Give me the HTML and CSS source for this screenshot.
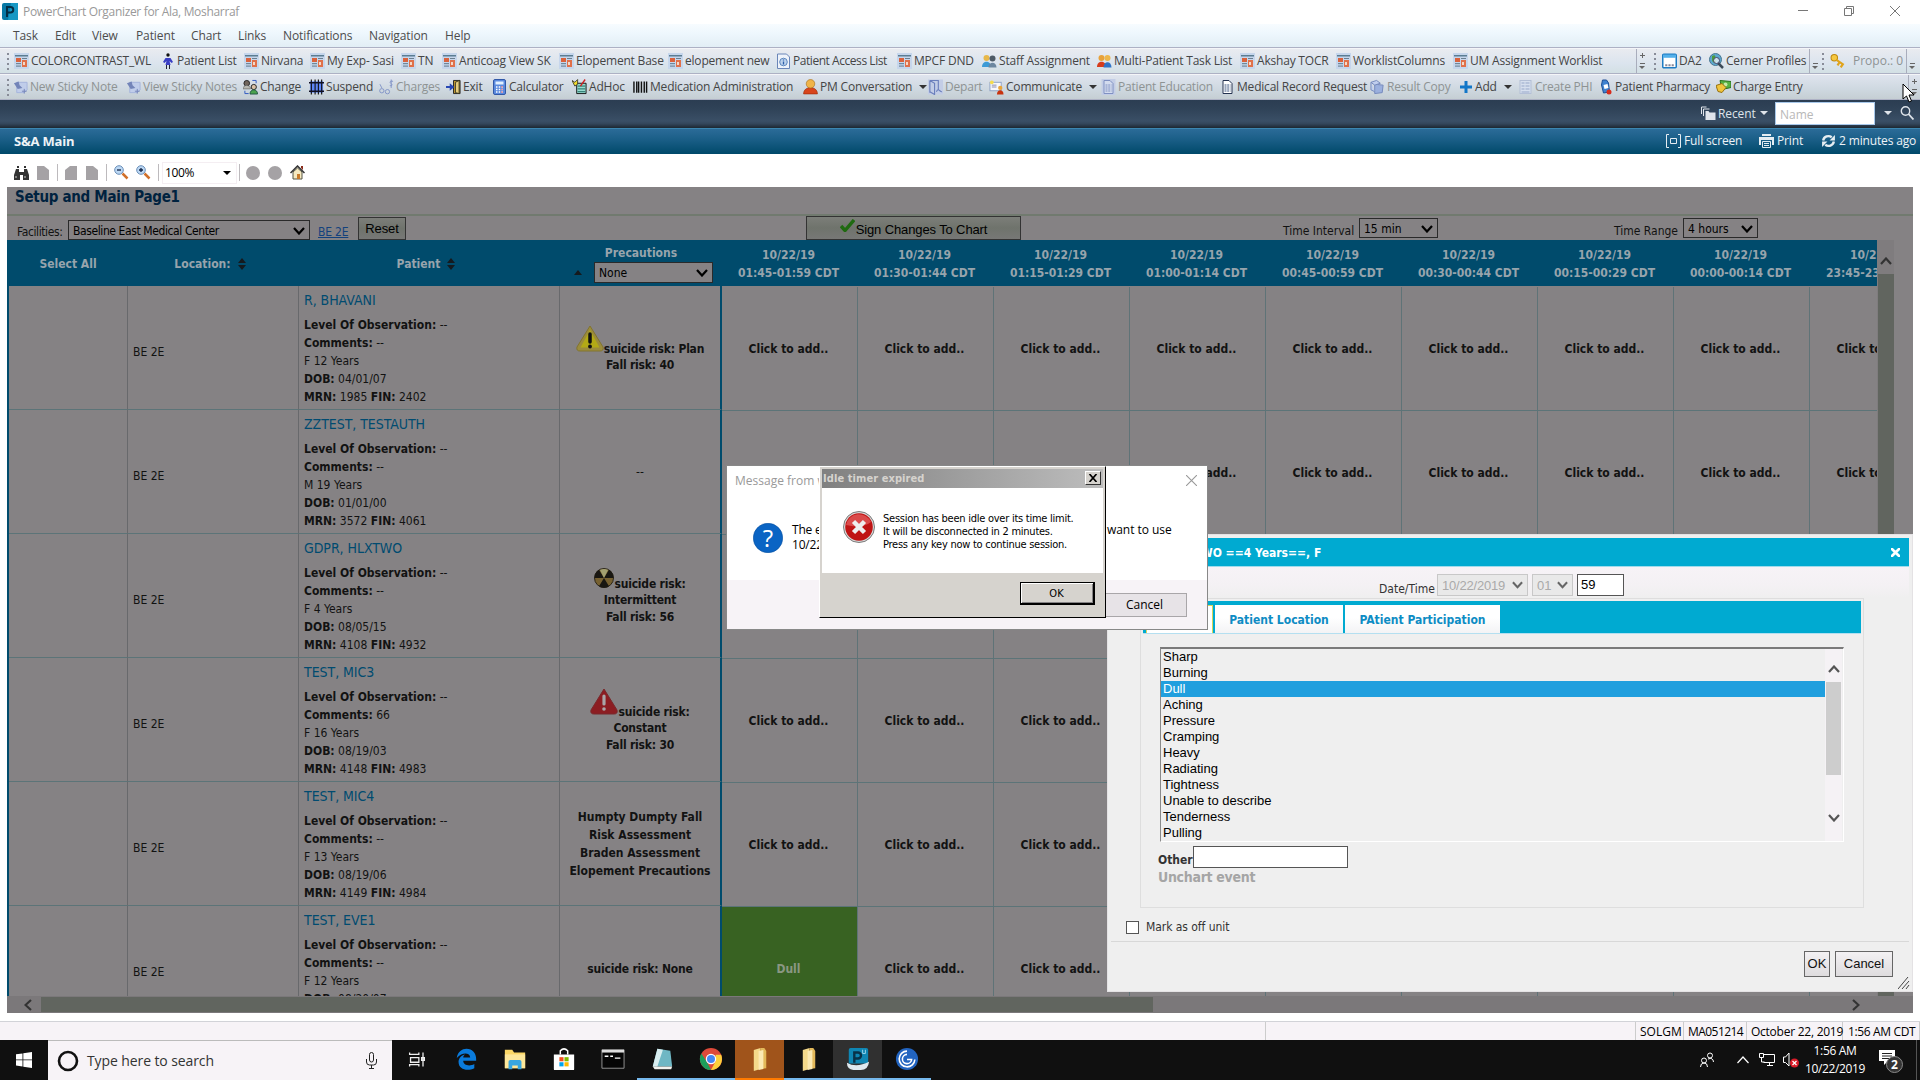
FILE: index.html
```html
<!DOCTYPE html>
<html lang="en">
<head>
<meta charset="utf-8">
<title>PowerChart Organizer</title>
<link rel="stylesheet" href="styles.css">
</head>
<body>
<svg class="defs" aria-hidden="true">
<symbol id="i-work" viewBox="0 0 15 16"><rect width="15" height="16" fill="#c6d6ec"/><rect x="1" y="2" width="13" height="1.5" fill="#5b7d93"/><rect x="2" y="5" width="5" height="4" fill="#d9623d"/><rect x="8" y="5" width="5" height="1" fill="#6b7f90"/><rect x="8" y="7" width="5" height="7" fill="#e0704a"/><rect x="9" y="9" width="2" height="3" fill="#f3d8c8"/><rect x="2" y="10" width="5" height="1.2" fill="#71879a"/><rect x="2" y="12.500" width="5" height="1.2" fill="#71879a"/></symbol>
<symbol id="i-man" viewBox="0 0 11 16"><circle cx="5.500" cy="2" r="1.700" fill="#111"/><path d="M3 5h5l2.500 4-1.500 1-2-2 1 4H3l1-4-2 2-1.500-1z" fill="#3a3fc4"/><path d="M4 12v4M7 12v4" stroke="#223" /></symbol>
<symbol id="i-pal" viewBox="0 0 13 16"><path d="M.5 1h9l3 3v11.500H.5z" fill="#eef3fa" stroke="#6a86b8"/><circle cx="6.500" cy="9" r="3.800" fill="#bcd2ec" stroke="#5e88c0"/><path d="M6.500 6.500v1M6.500 8.500v3" stroke="#2d5ea8" stroke-width="1.300"/></symbol>
<symbol id="i-staff" viewBox="0 0 15 14"><circle cx="4.500" cy="4" r="3" fill="#e8b84a"/><path d="M0 13c0-7 9-7 9 0z" fill="#3d9bd6"/><circle cx="10.500" cy="4.500" r="3" fill="#4e5a66"/><path d="M6.500 13.500c0-6.500 8-6.500 8 0z" fill="#6c87a0"/></symbol>
<symbol id="i-multi" viewBox="0 0 15 14"><circle cx="4.500" cy="4" r="3" fill="#e8a23a"/><path d="M0 13c0-7 9-7 9 0z" fill="#d63c1d"/><circle cx="10.500" cy="4" r="3" fill="#edb74b"/><path d="M6.500 13.500c0-7 8-7 8 0z" fill="#2f74c8"/></symbol>
<symbol id="i-da" viewBox="0 0 14 14"><rect x=".7" y=".7" width="12.600" height="12.600" rx="1" fill="#fff" stroke="#1d7cc4" stroke-width="1.400"/><rect x="1" y="1" width="12" height="3" fill="#53b0ea"/><path d="M3 11h8" stroke="#889" stroke-width="2" stroke-dasharray="2 1"/></symbol>
<symbol id="i-globe" viewBox="0 0 15 16"><circle cx="6.500" cy="6.500" r="6" fill="#5ca8d0" stroke="#47758f"/><path d="M3 3c3-2 4 0 3 2s2 2 1 4-4 0-4-2z" fill="#4d9b3c"/><path d="M9 10l5 5" stroke="#3b4a58" stroke-width="2.500"/><circle cx="7.500" cy="7.500" r="3" fill="#e6f2fa" fill-opacity=".8" stroke="#446"/></symbol>
<symbol id="i-key" viewBox="0 0 14 14"><circle cx="4" cy="4" r="3" fill="#f6c840" stroke="#c08a10"/><path d="M6 6l6 4-2 3M9 8l-2 3" stroke="#e0a41c" stroke-width="2" fill="none"/></symbol>
<symbol id="i-note" viewBox="0 0 16 16"><path d="M4 3h11v8l-3 3H4z" fill="#c0cdea" stroke="#a4b4dc"/><path d="M1 4l5-2 1 4 3 3-5 1z" fill="#7384b8"/><path d="M12 10v5M9.500 12.500h5" stroke="#7384b8"/></symbol>
<symbol id="i-change" viewBox="0 0 16 16"><circle cx="4" cy="4" r="3" fill="#70655c" stroke="#222"/><path d="M0 10c0-5 8-5 8 0z" fill="#b7b7b0" stroke="#444" stroke-width=".5"/><circle cx="11.500" cy="8" r="2.800" fill="#d9c0a6" stroke="#222"/><path d="M7.500 15.500c0-6 8-6 8 0z" fill="#4aa34e" stroke="#254"/><path d="M10 1h4v3M2 12v3h4" stroke="#2c55c0" fill="none"/></symbol>
<symbol id="i-susp" viewBox="0 0 16 16"><rect x="1" y="2" width="14" height="12" fill="#5f86f8"/><path d="M2.500 0v16M6.500 0v16M10 0v16M13.500 0v16" stroke="#111" stroke-width="1.200"/><path d="M0 3.500h16M0 12.500h16" stroke="#112" stroke-width="1.500"/></symbol>
<symbol id="i-chg" viewBox="0 0 16 16"><circle cx="3" cy="12" r="2.300" fill="none" stroke="#8193c6"/><circle cx="9" cy="13" r="2.300" fill="none" stroke="#8193c6"/><path d="M3 9L1 5M15 2c-3-1-4 1-2.500 2S15 7 11.500 6.500M13 0v9" stroke="#8193c6" fill="none"/></symbol>
<symbol id="i-exit" viewBox="0 0 16 16"><path d="M8 1h7v14H8z" fill="#c79a2e" stroke="#222"/><path d="M10 3l4-2v14l-4-1z" fill="#e7cd7c" stroke="#332"/><path d="M0 7h4V4l5 4-5 4V9H0z" fill="#2848b4"/></symbol>
<symbol id="i-calc" viewBox="0 0 13 16"><rect x=".5" y=".5" width="12" height="15" rx="1.500" fill="#5b8ade" stroke="#3158a8"/><rect x="2.500" y="2.500" width="8" height="3" fill="#e2f0ff"/><path d="M3 8h7M3 10.500h7M3 13h7" stroke="#fff" stroke-width="1.500" stroke-dasharray="1.500 1.200"/><path d="M9 7v7" stroke="#e55" stroke-dasharray="1.500 1.200"/></symbol>
<symbol id="i-adhoc" viewBox="0 0 16 16"><path d="M5 4h10v11H5z" fill="#9adbd0" stroke="#111"/><path d="M6 7h8M6 10h8M6 13h8" stroke="#16655c"/><path d="M0 1l3 2 3-3v5l-3 2z" fill="#f3dd2b" stroke="#443"/><path d="M14 0l-5 7" stroke="#c22" stroke-width="1.500"/></symbol>
<symbol id="i-bar" viewBox="0 0 16 14"><path d="M1 1v12M4 1v12M6 1v12M9 1v12M12 1v12M14.500 1v12" stroke="#111" stroke-width="1.500"/></symbol>
<symbol id="i-pm" viewBox="0 0 13 15"><path d="M0 14c0-8 13-8 13 0z" fill="#d8451c" stroke="#9c2a0a" stroke-width=".6"/><circle cx="6.500" cy="4.500" r="4" fill="#f0b449" stroke="#a9701a" stroke-width=".6"/></symbol>
<symbol id="i-dep" viewBox="0 0 16 16"><rect width="16" height="16" fill="#c3cde6"/><path d="M2 1h9v10M2 1v13M2 1l5 3v12l-5-3M9 13c2-5 4 1 6 0" fill="none" stroke="#6b7fbc" stroke-width="1.200"/></symbol>
<symbol id="i-com" viewBox="0 0 16 16"><rect x="1" y="3" width="12" height="9" fill="#f7f7fb" stroke="#8ca0c4"/><path d="M3 6h5M3 8h5" stroke="#88a"/><circle cx="3" cy="3" r="2" fill="#f6dc4c"/><circle cx="12" cy="9" r="2.300" fill="#e9a53a"/><path d="M8.500 16c0-6 7-6 7 0z" fill="#c8330f"/></symbol>
<symbol id="i-doc" viewBox="0 0 14 16"><path d="M2.500 1.500h6l3 3v10h-9z" fill="#fff" stroke="#243250"/><path d="M4 6h6M4 8h6M4 10h6M4 12h6" stroke="#36507c" stroke-dasharray="2 .7"/></symbol>
<symbol id="i-docoff" viewBox="0 0 14 16"><rect width="14" height="16" fill="#c3cde6"/><path d="M2.500 1.500h6l3 3v10h-9z" fill="#d3dbee" stroke="#7f90c2"/><path d="M4 6h6M4 8h6M4 10h6M4 12h6" stroke="#7f90c2" stroke-dasharray="2 .7"/></symbol>
<symbol id="i-copy" viewBox="0 0 16 16"><path d="M5 5l9 1-1 8-8 1z" fill="#9bb0de" stroke="#7388bb"/><path d="M1 3l6-2 4 3-6 2zM1 3v8l4 2" fill="#c1cfee" stroke="#7388bb"/></symbol>
<symbol id="i-add" viewBox="0 0 12 12"><path d="M6 0v12M0 6h12" stroke="#1176c8" stroke-width="3"/></symbol>
<symbol id="i-phi" viewBox="0 0 12 16"><rect x=".5" y="1.500" width="11" height="13" fill="#d6dfee" stroke="#b3bfd6"/><path d="M2 4h3M6 4h4M2 7h3M6 7h4M2 10h3M6 10h4M2 13h8" stroke="#97a7c8"/></symbol>
<symbol id="i-pha" viewBox="0 0 11 16"><path d="M2 1l4 0 2 3 1 9-6 1L1 6z" fill="#3f82d0" stroke="#1e4f96"/><path d="M3 6l4-1 1 4-4 1z" fill="#fff"/><circle cx="8.500" cy="13" r="2.500" fill="#d82c1c"/></symbol>
<symbol id="i-ce" viewBox="0 0 15 15"><path d="M4 1l11 1v6l-9 2z" fill="#57b243" stroke="#2b7320"/><circle cx="9.500" cy="5" r="2" fill="#c5eaa8"/><path d="M0 6l6-2 4 4-4 5-4-1z" fill="#f0c53c" stroke="#96700e"/></symbol>
<symbol id="i-warn" viewBox="0 0 28 27"><path d="M14 1L27 22q1 4-3 4H4q-4 0-3-4z" fill="#9b8c3c" stroke="#82742f"/><path d="M14 5l9.500 17.500h-19z" fill="#b3aa15"/><path d="M14 9v8" stroke="#111" stroke-width="3.500" stroke-linecap="round"/><circle cx="14" cy="21.500" r="1.900" fill="#111"/></symbol>
<symbol id="i-alert" viewBox="0 0 28 27"><path d="M14 1L27 22q1 4-3 4H4q-4 0-3-4z" fill="#8c1d22" stroke="#79292c"/><path d="M14 8v8" stroke="#a9a6a8" stroke-width="3.200" stroke-linecap="round"/><circle cx="14" cy="21" r="1.800" fill="#a9a6a8"/></symbol>
<symbol id="i-rad" viewBox="0 0 20 20"><circle cx="10" cy="10" r="9.500" fill="#776131" stroke="#2c261a"/><path d="M10 10L5 1.800a9.500 9.500 0 0 0-4.500 8.200zM10 10l9.500 0a9.500 9.500 0 0 0-4.500-8.200zM10 10l-5 8.200a9.500 9.500 0 0 0 10 0z" fill="#191712"/><path d="M10 10L6 2q4-2 8 0z" fill="#a3a070"/></symbol>
<symbol id="i-chev" viewBox="0 0 12 8"><path d="M1 1l5 5.500L11 1" fill="none" stroke="currentColor" stroke-width="2.200"/></symbol>
<symbol id="i-sort" viewBox="0 0 8 12"><path d="M4 0l4 5H0zM4 12l4-5H0z" fill="#151a1e"/></symbol>
<symbol id="i-x" viewBox="0 0 10 10"><path d="M0 0l10 10M10 0L0 10" stroke="currentColor" fill="none"/></symbol>
<symbol id="i-page" viewBox="0 0 12 14"><path d="M0 0h7l5 4v10H0z" fill="#a5a2a5"/></symbol>
<symbol id="i-folder" viewBox="0 0 14 24"><path d="M0 2l7-2v22l-7 2z" fill="#f4d98b"/><path d="M7 0h4l2 3v18l-6 1z" fill="#e3b95a"/><path d="M5 3l5-1v20l-5 1z" fill="#fbe9b4"/></symbol>
</svg>

<header class="titlebar">
  <svg class="logo" viewBox="0 0 16 17"><rect width="16" height="17" rx="2" fill="#0879a6"/><path d="M9 0h7v17H6z" fill="#1898c4"/><path d="M5 14V4h3.500a2.700 2.700 0 0 1 0 5.500H5" fill="none" stroke="#052e45" stroke-width="2"/></svg>
  <span>PowerChart Organizer for Ala, Mosharraf</span>
  <div class="winbtns"><svg viewBox="0 0 10 10"><path d="M0 4.500h10" stroke="#777"/></svg><svg viewBox="0 0 10 10"><path d="M.5 2.500h7v7h-7zM2.500 2.500v-2h7v7h-2" fill="none" stroke="#777"/></svg><svg class="c"><use href="#i-x"/></svg></div>
</header>
<nav class="menu"><span>Task</span><span>Edit</span><span>View</span><span>Patient</span><span>Chart</span><span>Links</span><span>Notifications</span><span>Navigation</span><span>Help</span></nav>

<div class="tools t1">
  <i class="grip"></i>
  <a><svg><use href="#i-work"/></svg>COLORCONTRAST_WL</a>
  <a><svg class="n"><use href="#i-man"/></svg>Patient List</a>
  <a><svg><use href="#i-work"/></svg>Nirvana</a>
  <a><svg><use href="#i-work"/></svg>My Exp- Sasi</a>
  <a><svg><use href="#i-work"/></svg>TN</a>
  <a><svg><use href="#i-work"/></svg>Anticoag View SK</a>
  <a><svg><use href="#i-work"/></svg>Elopement Base</a>
  <a><svg><use href="#i-work"/></svg>elopement new</a>
  <a class="tight"><svg><use href="#i-pal"/></svg>Patient Access List</a>
  <a><svg><use href="#i-work"/></svg>MPCF DND</a>
  <a><svg><use href="#i-staff"/></svg>Staff Assignment</a>
  <a><svg><use href="#i-multi"/></svg>Multi-Patient Task List</a>
  <a><svg><use href="#i-work"/></svg>Akshay TOCR</a>
  <a><svg><use href="#i-work"/></svg>WorklistColumns</a>
  <a><svg><use href="#i-work"/></svg>UM Assignment Worklist</a>
  <i class="more plus"></i><i class="grip"></i>
  <a><svg><use href="#i-da"/></svg>DA2</a>
  <a><svg><use href="#i-globe"/></svg>Cerner Profiles</a>
  <i class="more"></i><i class="grip"></i>
  <a class="off key"><svg><use href="#i-key"/></svg>Propo.: 0</a>
  <i class="more"></i>
</div>
<div class="tools t2">
  <i class="grip"></i>
  <a class="off"><svg><use href="#i-note"/></svg>New Sticky Note</a>
  <a class="off"><svg><use href="#i-note"/></svg>View Sticky Notes</a>
  <a><svg><use href="#i-change"/></svg>Change</a>
  <a><svg><use href="#i-susp"/></svg>Suspend</a>
  <a class="off"><svg><use href="#i-chg"/></svg>Charges</a>
  <a><svg><use href="#i-exit"/></svg>Exit</a>
  <a><svg><use href="#i-calc"/></svg>Calculator</a>
  <a><svg><use href="#i-adhoc"/></svg>AdHoc</a>
  <a><svg><use href="#i-bar"/></svg>Medication Administration</a>
  <a><svg><use href="#i-pm"/></svg>PM Conversation<b></b></a>
  <a class="off"><svg><use href="#i-dep"/></svg>Depart</a>
  <a><svg><use href="#i-com"/></svg>Communicate<b></b></a>
  <a class="off"><svg><use href="#i-docoff"/></svg>Patient Education</a>
  <a><svg><use href="#i-doc"/></svg>Medical Record Request</a>
  <a class="off"><svg><use href="#i-copy"/></svg>Result Copy</a>
  <a><svg class="pl"><use href="#i-add"/></svg>Add<b></b></a>
  <a class="off"><svg><use href="#i-phi"/></svg>Create PHI</a>
  <a><svg class="n"><use href="#i-pha"/></svg>Patient Pharmacy</a>
  <a><svg><use href="#i-ce"/></svg>Charge Entry</a>
  <i class="more plus"></i>
</div>

<div class="navbar">
  <svg class="recent" viewBox="0 0 15 14"><path d="M1 8V1h5M3 10V3h6" fill="none" stroke="#dfe4ea"/><path d="M5 5h3l1 1.500h6V14H5z" fill="#dfe4ea"/></svg>
  <span>Recent</span><b></b><div class="name">Name</div><b class="d2"></b>
  <svg class="mag" viewBox="0 0 14 14"><circle cx="5.500" cy="5" r="4.200" fill="none" stroke="#dfe4ea" stroke-width="1.400"/><path d="M8.500 8l5 5.500" stroke="#dfe4ea" stroke-width="1.800"/></svg>
</div>
<div class="sabar">
  <strong>S&amp;A Main</strong>
  <span class="fs"><svg viewBox="0 0 15 14"><path d="M3 .5H.5v13H3M12 .5h2.500v13H12M4.500 4.500h6v5h-6z" fill="none" stroke="#e6edf2"/></svg>Full screen</span>
  <span class="pr"><svg viewBox="0 0 15 14"><path d="M3 0h9v2H3zM0 3h15v8h-2V6H2v5H0z" fill="#e6edf2"/><path d="M3.500 7.500h8v6h-8zM5 9.500h5M5 11.500h5" fill="none" stroke="#e6edf2"/></svg>Print</span>
  <span class="rf"><svg viewBox="0 0 14 13"><path d="M2 6a5 5 0 0 1 8-3M12 7a5 5 0 0 1-8 3" fill="none" stroke="#e6edf2" stroke-width="2.200"/><path d="M8 6h5V1zM6 7H1v5z" fill="#e6edf2"/></svg>2 minutes ago</span>
</div>
<div class="browser">
  <svg class="bino" viewBox="0 0 15 14"><path d="M2 3h3v3h5V3h3l2 6v5H9V9H6v5H0V9zM3 0h2v2H3zM10 0h2v2h-2z" fill="#333"/><path d="M2 10v2M11 10v2" stroke="#ccc"/></svg>
  <svg class="pg"><use href="#i-page"/></svg><i></i>
  <svg class="pg flip"><use href="#i-page"/></svg><svg class="pg"><use href="#i-page"/></svg><i></i>
  <svg class="zm" viewBox="0 0 15 15"><circle cx="5" cy="5" r="4.300" fill="#bcd8f4" stroke="#6b8fb8"/><path d="M3 5h4" stroke="#124" stroke-width="1.300"/><path d="M8.500 8.500l5 5" stroke="#d0702a" stroke-width="2.500"/></svg>
  <svg class="zm" viewBox="0 0 15 15"><circle cx="5" cy="5" r="4.300" fill="#bcd8f4" stroke="#6b8fb8"/><path d="M3 5h4M5 3v4" stroke="#124" stroke-width="1.300"/><path d="M8.500 8.500l5 5" stroke="#d0702a" stroke-width="2.500"/></svg><i></i>
  <div class="pct">100%<b></b></div><i class="last"></i><em></em><em></em>
  <svg class="home" viewBox="0 0 15 15"><path d="M3 7v7h9V7L7.500 3z" fill="#f5e9c0" stroke="#554"/><path d="M.5 8l7-7 7 7" fill="none" stroke="#333" stroke-width="1.500"/><path d="M7 9h3v5H7z" fill="#c87a2a"/><path d="M11 1h2v4l-2-2z" fill="#8b2b1a"/></svg>
</div>

<main class="page">
  <h1>Setup and Main Page1</h1>
  <div class="filters">
    <label class="l1">Facilities:</label><div class="sel s1">Baseline East Medical Center<svg><use href="#i-chev"/></svg></div>
    <a class="be">BE 2E</a><div class="btn reset">Reset</div>
    <div class="btn sign"><svg viewBox="0 0 15 13"><path d="M1 7l4 4.500L14 1" fill="none" stroke="#1f6a10" stroke-width="3.400"/></svg>Sign Changes To Chart</div>
    <label class="l2">Time Interval</label><div class="sel s2">15 min<svg><use href="#i-chev"/></svg></div>
    <label class="l3">Time Range</label><div class="sel s3">4 hours<svg><use href="#i-chev"/></svg></div>
  </div>
  <div class="mid">
  <div class="grid">
    <div class="row head">
      <div>Select All</div><div class="hl">Location: <svg class="so"><use href="#i-sort"/></svg></div><div class="hl">Patient <svg class="so"><use href="#i-sort"/></svg></div>
      <div class="pc"><span>Precautions</span><div class="pcs"><i></i><div class="sel">None<svg><use href="#i-chev"/></svg></div></div></div>
      <div>10/22/19<br>01:45-01:59 CDT</div><div>10/22/19<br>01:30-01:44 CDT</div><div>10/22/19<br>01:15-01:29 CDT</div><div>10/22/19<br>01:00-01:14 CDT</div><div>10/22/19<br>00:45-00:59 CDT</div><div>10/22/19<br>00:30-00:44 CDT</div><div>10/22/19<br>00:15-00:29 CDT</div><div>10/22/19<br>00:00-00:14 CDT</div><div>10/22/19<br>23:45-23:59 CDT</div>
    </div>
    <div class="row">
      <div></div><div class="loc">BE 2E</div>
      <div class="pt"><a>R, BHAVANI</a><p><b>Level Of Observation:</b> --</p><p><b>Comments:</b> --</p><p>F 12 Years</p><p><b>DOB:</b> 04/01/07</p><p><b>MRN:</b> 1985 <b>FIN:</b> 2402</p></div>
      <div class="pre nar"><span class="ic w"><svg><use href="#i-warn"/></svg>suicide risk: Plan</span><span class="n16">Fall risk: 40</span></div>
      <div>Click to add..</div><div>Click to add..</div><div>Click to add..</div><div>Click to add..</div><div>Click to add..</div><div>Click to add..</div><div>Click to add..</div><div>Click to add..</div><div>Click to add..</div>
    </div>
    <div class="row">
      <div></div><div class="loc">BE 2E</div>
      <div class="pt"><a>ZZTEST, TESTAUTH</a><p><b>Level Of Observation:</b> --</p><p><b>Comments:</b> --</p><p>M 19 Years</p><p><b>DOB:</b> 01/01/00</p><p><b>MRN:</b> 3572 <b>FIN:</b> 4061</p></div>
      <div class="pre thin">--</div>
      <div>Click to add..</div><div>Click to add..</div><div>Click to add..</div><div>Click to add..</div><div>Click to add..</div><div>Click to add..</div><div>Click to add..</div><div>Click to add..</div><div>Click to add..</div>
    </div>
    <div class="row">
      <div></div><div class="loc">BE 2E</div>
      <div class="pt"><a>GDPR, HLXTWO</a><p><b>Level Of Observation:</b> --</p><p><b>Comments:</b> --</p><p>F 4 Years</p><p><b>DOB:</b> 08/05/15</p><p><b>MRN:</b> 4108 <b>FIN:</b> 4932</p></div>
      <div class="pre nar"><span class="ic r"><svg><use href="#i-rad"/></svg>suicide risk:</span><span class="n16">Intermittent</span><span>Fall risk: 56</span></div>
      <div></div><div></div><div></div><div></div><div></div><div></div><div></div><div></div><div></div>
    </div>
    <div class="row">
      <div></div><div class="loc">BE 2E</div>
      <div class="pt"><a>TEST, MIC3</a><p><b>Level Of Observation:</b> --</p><p><b>Comments:</b> 66</p><p>F 16 Years</p><p><b>DOB:</b> 08/19/03</p><p><b>MRN:</b> 4148 <b>FIN:</b> 4983</p></div>
      <div class="pre nar"><span class="ic w"><svg><use href="#i-alert"/></svg>suicide risk:</span><span class="n16">Constant</span><span>Fall risk: 30</span></div>
      <div>Click to add..</div><div>Click to add..</div><div>Click to add..</div><div></div><div></div><div></div><div></div><div></div><div></div>
    </div>
    <div class="row">
      <div></div><div class="loc">BE 2E</div>
      <div class="pt"><a>TEST, MIC4</a><p><b>Level Of Observation:</b> --</p><p><b>Comments:</b> --</p><p>F 13 Years</p><p><b>DOB:</b> 08/19/06</p><p><b>MRN:</b> 4149 <b>FIN:</b> 4984</p></div>
      <div class="pre"><span>Humpty Dumpty Fall</span><span>Risk Assessment</span><span>Braden Assessment</span><span>Elopement Precautions</span></div>
      <div>Click to add..</div><div>Click to add..</div><div>Click to add..</div><div></div><div></div><div></div><div></div><div></div><div></div>
    </div>
    <div class="row">
      <div></div><div class="loc">BE 2E</div>
      <div class="pt"><a>TEST, EVE1</a><p><b>Level Of Observation:</b> --</p><p><b>Comments:</b> --</p><p>F 12 Years</p><p><b>DOB:</b> 08/20/07</p></div>
      <div class="pre nar">suicide risk: None</div>
      <div class="dull">Dull</div><div>Click to add..</div><div>Click to add..</div><div></div><div></div><div></div><div></div><div></div><div></div>
    </div>
  </div>
  <div class="vs"><svg><use href="#i-chev"/></svg><i></i></div>
  </div>
  <div class="hs"><svg class="la"><use href="#i-chev"/></svg><i></i><svg class="ra"><use href="#i-chev"/></svg></div>
</main>

<div class="status"><span class="a"></span><span class="b"></span><span>SOLGM</span><span>MA051214</span><span>October 22, 2019</span><span>1:56 AM CDT</span></div>

<footer class="task">
  <div class="start"><svg viewBox="0 0 16 16"><path d="M0 2.300l6.500-.9v6H0zM7.300 1.300L16 0v7.400H7.300zM0 8.200h6.500v6.200L0 13.500zM7.300 8.200H16V16l-8.700-1.300z" fill="#fff"/></svg></div>
  <div class="search"><svg class="o" viewBox="0 0 22 22"><circle cx="11" cy="11" r="9" fill="none" stroke="#111" stroke-width="2.600"/></svg><span>Type here to search</span><svg class="mic" viewBox="0 0 11 17"><rect x="3.500" y=".5" width="4" height="9.500" rx="2" fill="none" stroke="#222"/><path d="M.5 7v3q0 3 3 3h4q3 0 3-3V7M5.500 13v4M3 16.500h5" fill="none" stroke="#222"/></svg></div>
  <div class="app"><svg viewBox="0 0 26 26"><path d="M5 6v2h10V6M6 11.500h9v5H6zM5 21v-2h10v2M19.500 6v15M18 11.500h3v3h-3z" fill="none" stroke="#eee" stroke-width="1.400"/></svg></div>
  <div class="app"><svg viewBox="0 0 26 26"><path d="M3 12C4 5 9 2 13.500 2 20 2 24 7 24 13v2H10c0 5 7 6.500 12 3.500v4.500C14 27 4 24 5 15c.5-4 4-6.500 7-7-1.500 1-2 2-2 3.500h7.500C17.500 6 9 5 3 12z" fill="#0a7bdc"/></svg></div>
  <div class="app"><svg viewBox="0 0 26 26"><path d="M2 3h8l2 3h12v17H2z" fill="#fbd766"/><path d="M2 8h22v15H2z" fill="#fde79a"/><path d="M6 24v-8q0-2 2-2h10q2 0 2 2v8h-4v-4h-6v4z" fill="#38a6e0"/></svg></div>
  <div class="app"><svg viewBox="0 0 26 26"><path d="M9 8V4q4-4 8 0v4" fill="none" stroke="#fff" stroke-width="1.600"/><path d="M2 8h22v16q0 1-1 1H3q-1 0-1-1z" fill="#fff"/><path d="M8 11h4.500v4.500H8z" fill="#f25022"/><path d="M13.500 11H18v4.500h-4.500z" fill="#7fba00"/><path d="M8 16.500h4.500V21H8z" fill="#00a4ef"/><path d="M13.500 16.500H18V21h-4.500z" fill="#ffb900"/></svg></div>
  <div class="app"><svg viewBox="0 0 26 26"><path d="M1 3h24v20H1z" fill="#050505" stroke="#999"/><path d="M1 3h24v3H1z" fill="#ddd"/><path d="M4 10h4M10 10h3M15 12h6" stroke="#fff" stroke-width="1.500"/></svg></div>
  <div class="app on"><svg viewBox="0 0 26 26"><path d="M8 2l14 2 2 17H3z" fill="#6fb7c4"/><path d="M8 2l6 1-6 18H3z" fill="#d9eef0"/><path d="M3 21h21l-1 3H5z" fill="#f2f2ee"/></svg></div>
  <div class="app on"><svg viewBox="0 0 26 26"><circle cx="13" cy="13" r="12" fill="#de4a3a"/><path d="M2.600 7L9 17l4 8A12 12 0 0 1 2.600 7z" fill="#1d9f5b"/><path d="M13 25l5-9.500L18 8.500h6A12 12 0 0 1 13 25z" fill="#fdd03b"/><circle cx="13" cy="13" r="5" fill="#4587f3" stroke="#fff" stroke-width="1.300"/></svg></div>
  <div class="app on org"><svg class="fo"><use href="#i-folder"/></svg></div>
  <div class="app on"><svg class="fo"><use href="#i-folder"/></svg></div>
  <div class="app on cur"><svg viewBox="0 0 26 26"><path d="M3 3q0-2 2-2h17q2 0 2 2v15H3z" fill="#0f86b3"/><path d="M9 17V6h4a3.200 3.200 0 0 1 0 6.500H9" fill="none" stroke="#083248" stroke-width="2.600"/><path d="M18 3v4h3V3" fill="none" stroke="#9fd8ee"/><path d="M1 17q10 6 24-1-1 9-9 9H8q-7-1-7-8z" fill="#dfe9ef"/></svg></div>
  <div class="app on"><svg viewBox="0 0 26 26"><circle cx="13" cy="13" r="12" fill="#2264c0"/><path d="M13 4.500a8.500 8.500 0 1 0 8.500 9M13 8a5 5 0 1 0 5 5.500h-5" fill="none" stroke="#fff" stroke-width="1.700"/></svg></div>
  <div class="tray">
    <svg class="ppl" viewBox="0 0 14 16"><circle cx="10" cy="3.500" r="2.500" fill="none" stroke="#fff"/><circle cx="4" cy="8.500" r="2.500" fill="none" stroke="#fff"/><path d="M.5 15q0-4 3.500-4t3.500 4M8 7q5-2 5.500 3" fill="none" stroke="#fff"/></svg>
    <svg class="up" viewBox="0 0 12 8"><path d="M.5 7L6 1l5.500 6" fill="none" stroke="#fff" stroke-width="1.200"/></svg>
    <svg class="mon" viewBox="0 0 16 14"><path d="M4.500 1.500h11v8h-11M8 12.500h6M10.500 10v2M.5 .5h4v4h-4zM2.500 5v4h3" fill="none" stroke="#fff"/></svg>
    <svg class="spk" viewBox="0 0 16 16"><path d="M.5 5h2l3.500-4v13L2.500 10.500h-2z" fill="none" stroke="#fff"/><circle cx="11.500" cy="11" r="4.500" fill="#d81b28"/><path d="M9.500 9l4 4M13.500 9l-4 4" stroke="#fff" stroke-width="1.200"/></svg>
    <div class="clock">1:56 AM<br>10/22/2019</div>
    <svg class="ntf" viewBox="0 0 24 24"><path d="M0 1h16v11H9l-4 4v-4H0z" fill="#fff"/><path d="M3 4.500h10M3 7h10M3 9.500h7" stroke="#222"/><circle cx="15.500" cy="15.500" r="8" fill="#343434" stroke="#8a8a8a"/><text x="15.500" y="20" text-anchor="middle" class="nt">2</text></svg>
    <i class="peek"></i>
  </div>
</footer>

<section class="chart">
  <div class="ctitle"><span>GDPR, HLXTWO ==4 Years==, F</span><svg><use href="#i-x"/></svg></div>
  <div class="cdate"><span>Date/Time</span><div class="dis d1">10/22/2019<svg><use href="#i-chev"/></svg></div><div class="dis d2">01<svg><use href="#i-chev"/></svg></div><div class="inp">59</div></div>
  <div class="panel">
    <div class="tabs"><div class="tab act"></div><div class="tab tl">Patient Location</div><div class="tab tp">PAtient Participation</div></div>
    <div class="list"><ul><li>Sharp</li><li>Burning</li><li class="sl">Dull</li><li>Aching</li><li>Pressure</li><li>Cramping</li><li>Heavy</li><li>Radiating</li><li>Tightness</li><li>Unable to describe</li><li>Tenderness</li><li>Pulling</li></ul><div class="lsb"><svg class="u"><use href="#i-chev"/></svg><i></i><svg><use href="#i-chev"/></svg></div></div>
    <div class="other"><b>Other</b><div class="inp"></div></div>
    <div class="unch">Unchart event</div>
  </div>
  <div class="off-unit"><i></i>Mark as off unit</div>
  <div class="cfoot"><div class="cb ok">OK</div><div class="cb cn">Cancel</div></div>
  <svg class="rz" viewBox="0 0 12 12"><path d="M0 12L10 0M4 12l7-8M8 12l3-4" stroke="#444" fill="none"/></svg>
</section>

<section class="msg">
  <div class="mtitle"><span>Message from webpage</span><svg><use href="#i-x"/></svg></div>
  <div class="mbody"><svg viewBox="0 0 30 30"><circle cx="15" cy="15" r="14.700" fill="#0a64c4" stroke="#0850a0" stroke-width=".6"/><text x="15" y="23.500" text-anchor="middle" class="q">?</text></svg><p class="ml">The event<br>10/22/19</p><p class="mr">want to use</p></div>
  <div class="mfoot"><div>Cancel</div></div>
</section>

<section class="idle">
  <div class="ititle"><span>Idle timer expired</span><div><svg viewBox="0 0 10 8"><path d="M1.500 0l7 8M8.500 0l-7 8" stroke="#000" stroke-width="1.700"/></svg></div></div>
  <div class="ibody"><svg viewBox="0 0 32 32"><circle cx="16" cy="16" r="15.500" fill="#d8d8d8" stroke="#7c7c7c"/><circle cx="16" cy="16" r="13.800" fill="#bf1414"/><path d="M3 14a13.200 13.200 0 0 1 25-3q-9 7-25 3z" fill="#da4a4a"/><path d="M10.500 10.500l11 11M21.500 10.500l-11 11" stroke="#eee" stroke-width="4.500"/></svg><p>Session has been idle over its time limit.<br>It will be disconnected in 2 minutes.<br>Press any key now to continue session.</p></div>
  <div class="ifoot"><div>OK</div></div>
</section>
<svg class="cursor" viewBox="0 0 13 20"><path d="M1 1v15l3.500-3 2.500 6 2.500-1-2.500-6H12z" fill="#fff" stroke="#000"/></svg>
</body>
</html>
```

FILE: styles.css
```css
*{box-sizing:border-box}
html,body{margin:0;padding:0}
body{width:1920px;height:1080px;overflow:hidden;background:#fff;position:relative;font-family:"Open Sans","Noto Sans",sans-serif;font-size:12px;color:#000;white-space:nowrap}
p,h1,ul{margin:0;padding:0}
svg{display:block;flex:none}
.defs{position:absolute;width:0;height:0}

.titlebar{height:24px;display:flex;align-items:center;padding:0 0 1px 2px;color:#999}
.titlebar span{letter-spacing:-.32px}
.logo{width:16px;height:17px;margin-right:5px}
.winbtns{margin-left:auto;display:flex;gap:36px;padding:0 20px 2px 0;color:#777}
.winbtns svg{width:10px;height:10px}
.menu{height:24px;display:grid;grid-template-columns:42px 37px 44px 55px 47px 45px 86px 76px 60px;align-items:center;padding-left:13px;color:#4c4c4c;letter-spacing:-.1px;background:linear-gradient(#f7fcff,#eef7fd 40%,#e2eef5);border-bottom:1px solid #adb1c4}

.tools{display:grid;height:26px;align-items:center;border-bottom:1px solid #adb1c4;border-top:1px solid #f4f5f8;color:#454545;letter-spacing:-.2px}
.tools a{display:flex;align-items:center;white-space:pre;padding-bottom:1px}
.tools svg{width:15px;height:16px;margin-right:2px}
.tools svg.n{width:12px;margin-right:3px}
.tools svg.pl{width:12px;height:12px;margin:1px 3px 0 0}
.tools .tight{letter-spacing:-.45px}
.tools .off{color:#8e9393}
.tools .key{letter-spacing:0}
.key svg{margin-right:8px}
.tools b,.navbar b,.pct b{display:block;border:4px solid transparent;border-top-color:#333;border-bottom:0;margin-left:7px}
.grip{width:2px;height:17px;background:repeating-linear-gradient(#888c98 0 2px,transparent 2px 5px)}
.more{height:24px;border-left:1px solid #a9adbc;position:relative}
.more::after{content:"";position:absolute;left:2px;bottom:4px;border:3px solid transparent;border-top-color:#666;border-bottom:0}
.more::before{content:"";position:absolute;left:3px;bottom:9px;width:5px;height:1px;background:#666}
.plus{background:linear-gradient(#666,#666) 3px 6px/5px 1px no-repeat,linear-gradient(#666,#666) 5px 4px/1px 5px no-repeat}
.t1{background:linear-gradient(#e9ebf0,#dbe4ee 60%,#d3e0e4);grid-template-columns:7px 148px 82px 66px 91px 41px 117px 109px 108px 121px 85px 115px 143px 96px 117px 183px 18px 8px 47px 100px 13px 8px 76px 10px;padding-left:7px}
.t2{background:linear-gradient(#dfe4ee,#ced8e0 60%,#c5ced3);grid-template-columns:6px 113px 117px 66px 70px 67px 46px 80px 61px 170px 125px 61px 112px 119px 150px 90px 58px 82px 116px 192px 10px;padding-left:7px}

.navbar{height:28px;background:linear-gradient(#2b3d52,#2f4257 30%,#3a4f66 75%,#33465b 85%,#1c2731);display:flex;align-items:center;color:#dfe4ea;padding:0 0 2px 1700px}
.navbar .recent{width:16px;height:14px;margin-right:2px}
.navbar span{width:36px;letter-spacing:-.1px}
.navbar b{border-top-color:#dfe4ea;margin-left:6px}
.navbar .name{width:100px;height:23px;background:#fff;border:1px solid #a8c8ea;color:#b8b8b8;padding-left:4px;line-height:23px;margin:1px 0 0 7px}
.navbar .d2{margin-left:9px}
.mag{width:14px;height:14px;margin-left:8px}
.sabar{height:26px;background:linear-gradient(#2b6b98,#1b5f88 40%,#00496a);border-top:1px solid #3c86b0;display:flex;align-items:center;color:#eef3f7;padding:0 0 2px 14px}
.sabar strong{font-size:13px;width:1652px;letter-spacing:-.2px}
.sabar span{display:flex;align-items:center;letter-spacing:-.15px}
.sabar svg{width:15px;height:14px;margin-right:3px}
.fs{width:93px}.pr{width:62px}
.browser{height:33px;display:flex;align-items:center;padding:4px 0 0 14px}
.browser>i{width:1px;height:17px;background:#bdbabd;margin:0 7px}
.bino{width:15px;height:14px;margin-right:8px}
.pg{width:12px;height:14px}.flip{transform:scaleX(-1);margin-right:9px}
.pg+i{margin-left:8px!important}
.zm{width:15px;height:15px;margin-right:7px}
.zm+i{margin:0 3px 0 0!important}
.pct{width:75px;height:22px;border:1px solid #f4eef2;display:flex;align-items:center;padding:0 5px 0 2px;font-size:12px;letter-spacing:-.4px}
.pct b{margin-left:auto;border-top-color:#000}
.browser>i.last{margin:0 6px 0 2px}
.browser em{width:14px;height:14px;border-radius:7px;background:#a5a2a5;margin-right:8px}
.home{width:15px;height:15px}

.page{margin-left:7px;width:1906px;height:826px;background:#858284;font-family:"DejaVu Sans Condensed","DejaVu Sans",sans-serif;font-size:12px;overflow:hidden;color:#121212}
.page h1{font-size:15px;height:29px;line-height:21px;padding-left:8px;color:#00223f;border-bottom:2px solid #717a6f;letter-spacing:-.3px}
.filters{height:24px;display:flex;align-items:flex-end}
.filters label,.be{line-height:16px}
.sel{border:1px solid #2a2a2a;display:flex;align-items:center;justify-content:space-between;padding:1px 4px 0;color:#000;text-align:left}
.sel svg,.dis svg{width:12px;height:8px}
.l1{width:51px;margin-left:10px;letter-spacing:-.4px}.s1{width:242px;height:20px;letter-spacing:-.4px}
.be{margin-left:8px;width:40px;color:#13417d;text-decoration:underline;letter-spacing:-.2px}
.btn{border:1px solid #333;background:linear-gradient(#7c7e79,#6f736c 50%,#777876);display:flex;align-items:center;justify-content:center;font-family:"Liberation Sans",sans-serif;color:#000}
.reset{width:48px;height:23px;font-size:13px;letter-spacing:-.1px}
.sign{width:215px;height:24px;margin-left:400px;font-size:13px;letter-spacing:-.12px;padding-top:2px}
.sign svg{width:15px;height:13px;margin:-8px 1px 0 0}
.l2{margin-left:262px;width:76px;padding-bottom:1px}.s2{width:79px;height:20px;margin-bottom:2px}
.l3{margin-left:176px;width:69px;padding-bottom:1px}.s3{width:75px;height:20px;margin-bottom:2px}

.mid{display:flex;height:756px}
.grid{width:1870px;height:756px;overflow:hidden;border-left:2px solid #004b6c}
.row{display:grid;grid-template-columns:119px 171px 261px 162px repeat(9,136px);height:124px;width:1937px}
.row>div{border-right:1px solid #5f7377;border-bottom:1px solid #5c7478;display:flex;align-items:center;justify-content:center;font-weight:bold;min-width:0}
.row>div:nth-child(4){border-right:2px solid #004b6c}
.row>div:nth-child(-n+3){border-right-color:#68696c}
.row:not(.head)>div:nth-child(n+5){margin:1px 0 -1px}
.row>div:nth-child(n+5){padding-right:2px}
.row.head{height:46px;background:#004b6c}
.row.head>div{border-color:transparent;color:#97a4ac;line-height:18px;text-align:center;padding-top:2px}
.row.head>.hl{padding-right:6px}
.so{width:8px;height:12px;margin-left:7px}
.row .loc{justify-content:flex-start;padding:8px 0 0 5px;font-weight:normal}
.row .pt{display:block;padding:5px 0 0 5px;font-weight:normal;line-height:18px}
.pt a{display:block;font-size:14px;color:#004b70;margin-bottom:7px;letter-spacing:-.05px}
.row .pre{flex-direction:column;line-height:18px;padding-top:1px}
.row .nar{letter-spacing:-.2px;padding-top:2px}
.row .thin{font-weight:normal}
.n16{line-height:16px}
.ic{display:flex;align-items:flex-end;line-height:16px}
.ic svg{align-self:flex-start}
.w{height:32px}.w svg{width:28px;height:27px}
.r{height:24px}.r svg{width:20px;height:20px}
.row.head .pc{flex-direction:column;align-items:stretch;padding-top:1px}
.pc>span{padding-left:2px}
.pcs{display:flex;align-items:center;padding-left:14px;height:21px}
.pcs i{border:4px solid transparent;border-bottom:5px solid #151a1e;border-top:0;margin-right:12px}
.pcs .sel{width:119px;height:21px;background:#858284;font-weight:normal}
.row .dull{background:#386222;color:#8a9782}

.vs{width:17px;background:#7f7c7e;color:#333;display:flex;flex-direction:column;align-items:center}
.vs svg{width:12px;height:8px;transform:scaleY(-1);margin:17px 0 9px}
.vs i{width:16px;flex:1;background:#61655f}
.hs{height:17px;background:#7b787a;display:flex;align-items:center;color:#333}
.hs svg{width:12px;height:8px}
.la{transform:rotate(90deg);margin-left:15px}
.hs i{width:1112px;height:15px;background:#61655f;margin-left:7px}
.ra{transform:rotate(-90deg);margin-left:697px}

.status{margin-top:8px;height:19px;background:#f7f3f7;border-top:1px solid #d2d3d8;display:flex;line-height:19px}
.status span{border-right:1px solid #ccc;padding-left:4px;flex:none}
.status .a{width:1266px}.status .b{width:370px}
.status span:nth-child(3){width:48px}.status span:nth-child(4){width:63px;letter-spacing:-.55px}.status span:nth-child(5){width:96px;letter-spacing:-.25px}.status span:nth-child(6){width:77px;padding-left:5px;letter-spacing:-.35px}

.task{height:40px;background:#101010;display:flex}
.start{width:48px;display:flex;align-items:center;justify-content:center}
.start svg{width:16px;height:16px}
.search{width:344px;background:#f7f3f7;border-top:1px solid #bbb;display:flex;align-items:center;padding-left:9px;font-size:14px;color:#333}
.search .o{width:22px;height:22px;margin-right:8px}
.search span{width:279px;letter-spacing:-.1px}
.mic{width:11px;height:17px}
.app{width:49px;display:flex;align-items:center;justify-content:center;border-bottom:2px solid transparent;padding-left:1px}
.app svg{width:24px;height:24px}
.app .fo{width:15px;height:23px}
.on{border-bottom-color:#76b9ed}
.org{background:#a0541b;border-bottom-color:#ff7a00}
.cur{background:#303030}
.tray{margin-left:auto;display:flex;align-items:center;color:#fff;width:220px}
.ppl{width:14px;height:16px}.up{width:12px;height:8px;margin-left:23px}
.mon{width:16px;height:14px;margin-left:10px}.spk{width:16px;height:16px;margin-left:8px}
.clock{width:66px;margin-left:3px;text-align:center;line-height:18px;font-size:12px;letter-spacing:-.35px}
.ntf{width:24px;height:24px;margin-left:11px;margin-top:2px}
.nt{fill:#fff;font-size:12px;font-weight:bold}
.peek{width:1px;height:40px;background:#555;margin-left:13px}

.chart{position:absolute;left:1107px;top:534px;width:806px;height:458px;background:#efefef;border:1px solid #e4e2e4;padding:3px;font-family:"DejaVu Sans Condensed","DejaVu Sans",sans-serif;color:#333}
.ctitle{height:29px;background:#00aad1;color:#fff;font-weight:bold;display:flex;align-items:center;justify-content:space-between;padding:2px 9px 0 16px;border-bottom:1px solid #9fdcec}
.ctitle svg{width:9px;height:9px;stroke-width:3;margin-bottom:2px}
.cdate{height:31px;background:linear-gradient(#f7f3f7,#f4f1f4 60%,#efefef);display:flex;align-items:flex-end;padding-left:268px}
.cdate span{width:58px;line-height:17px}
.dis{height:22px;border:1px solid #c8c8c8;background:#e9e9e9;color:#aaa;display:flex;align-items:center;justify-content:space-between;padding:0 4px;font:13px "Liberation Sans",sans-serif;margin-bottom:2px}
.dis svg{color:#666;width:11px}
.d1{width:91px;letter-spacing:-.2px}.dis.d2{width:41px;margin:0 4px 2px}
.inp{width:47px;height:22px;border:1px solid #555;background:#fff;color:#000;padding-left:3px;font:13px/20px "Liberation Sans",sans-serif;margin-bottom:2px}
.panel{margin-left:29px;width:724px;height:310px;border:1px solid #dedede;padding:2px}
.tabs{height:33px;background:#00aad1;display:flex;padding:4px 0 0 3px;border-bottom:1px solid #b4dff0}
.tab{height:28px;background:linear-gradient(#fff,#fff 45%,#f3f3f5);color:#0e8cc4;font-weight:bold;display:flex;align-items:center;justify-content:center;padding-top:2px}
.act{width:67px;background:#fff;border:1px solid #d9d65a;border-bottom:0;margin-right:2px}
.tl{width:128px;margin-right:2px}.tp{width:155px}
.list{margin:13px 0 0 17px;width:684px;height:195px;border:1px solid #fff;border-top:2px solid #7a7a7a;border-left:1px solid #8a8a8a;display:flex;background:#efefef}
.list ul{width:664px;list-style:none;font:13px/16px "Liberation Sans",sans-serif;color:#000}
.list li{padding-left:2px}
.list .sl{background:#209fde;color:#fff}
.lsb{width:17px;background:#f5f2f5;color:#555;display:flex;flex-direction:column;align-items:center}
.lsb svg{width:12px;height:8px}.lsb .u{transform:scaleY(-1);margin-top:16px}
.lsb i{width:15px;height:93px;background:#cdcdcd;margin:9px 0 39px}
.other{display:flex;align-items:flex-end;padding-left:15px;margin-top:4px}
.other b{width:35px;line-height:16px}
.other .inp{width:155px;margin:0}
.unch{font-size:14px;font-weight:bold;color:#a5a5a5;padding-left:15px;line-height:19px;letter-spacing:-.3px}
.off-unit{display:flex;align-items:center;height:33px;padding:5px 0 0 15px;letter-spacing:-.05px}
.off-unit i{width:13px;height:13px;border:1px solid #555;background:#fff;margin-right:7px}
.cfoot{border-top:1px solid #d8d8d8;display:flex;padding:9px 0 0 693px;gap:5px}
.cb{height:26px;border:1px solid #666;background:linear-gradient(#f3f1f3,#dedcde);font:13px/24px "Liberation Sans",sans-serif;color:#111;text-align:center}
.ok{width:26px}.cn{width:58px}
.rz{position:absolute;right:2px;bottom:2px;width:12px;height:12px}

.msg{position:absolute;left:726px;top:465px;width:482px;height:165px;background:#fff;border:1px solid #888;display:flex;flex-direction:column}
.mtitle{height:30px;display:flex;align-items:center;justify-content:space-between;padding:0 10px 2px 8px;color:#999}
.mtitle svg{width:11px;height:11px}
.mbody{height:84px;display:flex;padding:21px 0 0 26px}
.mbody svg{width:30px;height:30px;margin-top:6px}
.mbody p{line-height:15px;padding-top:5px}
.ml{width:324px;padding-left:9px;letter-spacing:-.2px}
.mr{letter-spacing:-.05px}
.q{fill:#fff;font-size:24px}
.mfoot{flex:1;background:#f7f3f7;display:flex;padding-top:13px;padding-left:350px}
.mfoot div{width:110px;height:24px;border:1px solid #a9a6a9;background:#e7e3e7;line-height:22px;text-align:center;padding-left:25px}

.idle{position:absolute;left:819px;top:466px;width:287px;height:152px;background:#d6d3ce;border:1px solid #fff;border-right:1px solid #000;border-bottom:1px solid #000;padding:2px;font-family:"DejaVu Sans Condensed","DejaVu Sans",sans-serif;font-size:11px}
.ititle{height:19px;background:linear-gradient(90deg,#808080,#bdbdbd);color:#d6d3ce;font-weight:bold;display:flex;align-items:center;justify-content:space-between;padding:0 2px 0 1px;letter-spacing:.08px}
.ititle div{width:16px;height:14px;background:#d6d3ce;border:1px solid #fff;border-right-color:#333;border-bottom-color:#333;display:flex;align-items:center;justify-content:center;margin-bottom:1px}
.ititle svg{width:10px;height:8px}
.ibody{height:85px;background:#fff;display:flex;padding:23px 0 0 21px}
.ibody svg{width:32px;height:32px}
.ibody p{line-height:13px;margin-left:8px;letter-spacing:-.25px;padding-top:1px}
.ifoot div{width:75px;height:23px;margin:9px 0 0 198px;border:1px solid #000;border-right-width:2px;border-bottom-width:2px;text-align:center;line-height:22px;padding-right:1px;box-shadow:inset 1px 1px #fff,inset -1px -1px #848284}
.cursor{position:absolute;left:1902px;top:83px;width:13px;height:20px}
```
